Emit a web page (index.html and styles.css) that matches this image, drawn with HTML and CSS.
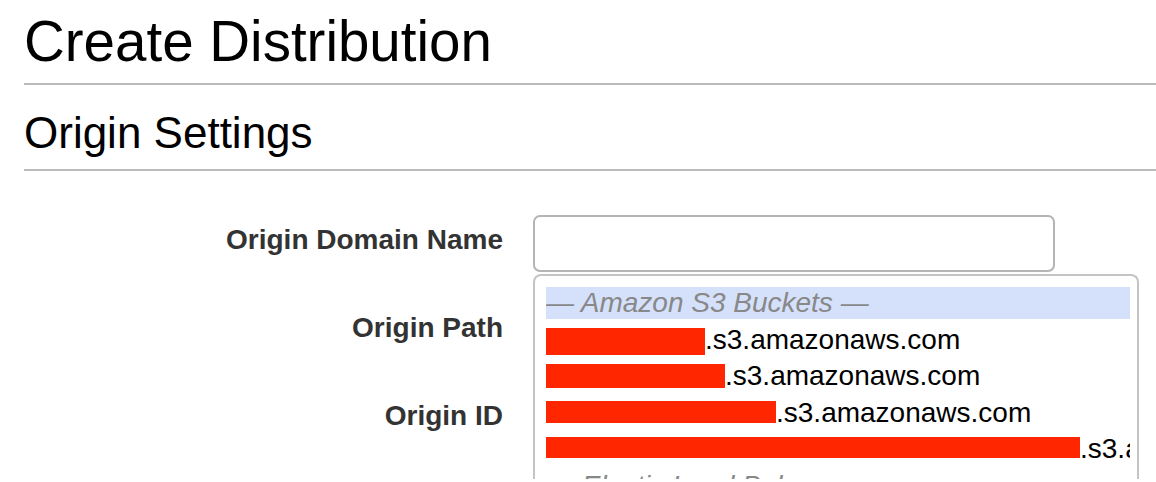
FILE: index.html
```html
<!DOCTYPE html>
<html lang="en">
<head>
<meta charset="UTF-8">
<meta name="viewport" content="width=device-width, initial-scale=1.0">
<link rel="stylesheet" href="styles.css">
</head>
<body>

<div class="page">
  <h1 class="title">Create Distribution</h1>
  <h2 class="section">Origin Settings</h2>

  <div class="form">
    <div class="row">
      <label class="field-label">Origin Domain Name</label>
      <div class="field">
        <div class="text-input"></div>
        <div class="dropdown">
          <div class="opt group active">— Amazon S3 Buckets —</div>
          <div class="opt"><span class="redact" style="width: 159px; height: 27px;"></span>.s3.amazonaws.com</div>
          <div class="opt"><span class="redact" style="width: 179px; height: 24px;"></span>.s3.amazonaws.com</div>
          <div class="opt"><span class="redact" style="width: 230px; height: 22px;"></span>.s3.amazonaws.com</div>
          <div class="opt"><span class="redact" style="width: 534px; height: 21px;"></span>.s3.amazonaws.com</div>
          <div class="opt group">— Elastic Load Balancers —</div>
        </div>
      </div>
    </div>
    <div class="row">
      <label class="field-label">Origin Path</label>
      <div class="field"></div>
    </div>
    <div class="row">
      <label class="field-label">Origin ID</label>
      <div class="field"></div>
    </div>
  </div>
</div>

</body>
</html>
```

FILE: styles.css
```css
body {
  margin: 0;
  font-family: 'Liberation Sans', Arial, sans-serif;
  color: #000;
  background: #fff;
  overflow: hidden;
}
.page {
  padding-left: 24px;
}
.title {
  margin: 0;
  padding-top: 12px;
  font-size: 56.5px;
  font-weight: normal;
  line-height: 60px;
  padding-bottom: 11px;
  border-bottom: 2px solid #bbb;
}
.section {
  margin: 0;
  padding-top: 24px;
  font-size: 44px;
  font-weight: normal;
  line-height: 48px;
  padding-bottom: 12px;
  border-bottom: 2px solid #bbb;
}
.form {
  padding-top: 44px;
}
.row {
  display: grid;
  grid-template-columns: 479px 1fr;
  column-gap: 30px;
  height: 88px;
}
.field-label {
  text-align: right;
  font-size: 28px;
  font-weight: bold;
  color: #333;
  line-height: 40px;
  padding-top: 5px;
}
.field {
  position: relative;
}
.text-input {
  width: 522px;
  height: 57px;
  box-sizing: border-box;
  border: 2px solid #b4b4b4;
  border-radius: 7px;
}
.dropdown {
  position: absolute;
  top: 59px;
  left: 0;
  width: 606px;
  height: 207px;
  box-sizing: border-box;
  border: 2px solid #c4c4c4;
  border-bottom: 0;
  border-radius: 8px 8px 0 0;
  background: #fff;
  padding: 11px 7px 0 11px;
  overflow: hidden;
  z-index: 2;
}
.opt {
  font-size: 28px;
  line-height: 32px;
  height: 32px;
  margin-bottom: 4.5px;
  white-space: nowrap;
  overflow: hidden;
}
.opt.group {
  font-style: italic;
  color: #888;
}
.opt.active {
  background: #d5e1fb;
}
.redact {
  display: inline-block;
  vertical-align: top;
  margin-top: 4px;
  background: #ff2600;
}
```
